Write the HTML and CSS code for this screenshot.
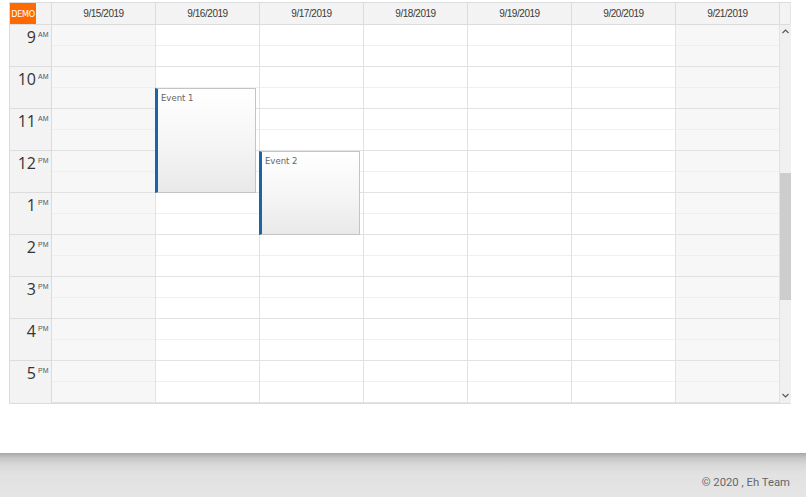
FILE: index.html
```html
<!DOCTYPE html>
<html>
<head>
<meta charset="utf-8">
<link rel="stylesheet" href="styles.css">
</head>
<body>
<div class="page">
  <div class="cal">
    <div class="head">
      <div class="corner"><span class="demo">DEMO</span></div>
      <div class="hcell">9/15/2019</div>
      <div class="hcell">9/16/2019</div>
      <div class="hcell">9/17/2019</div>
      <div class="hcell">9/18/2019</div>
      <div class="hcell">9/19/2019</div>
      <div class="hcell">9/20/2019</div>
      <div class="hcell">9/21/2019</div>
      <div class="hcell hscroll"></div>
    </div>
    <div class="body">
      <div class="times">
        <div class="hour"><span class="num">9</span><span class="ap">AM</span></div>
        <div class="hour"><span class="num">10</span><span class="ap">AM</span></div>
        <div class="hour"><span class="num">11</span><span class="ap">AM</span></div>
        <div class="hour"><span class="num">12</span><span class="ap">PM</span></div>
        <div class="hour"><span class="num">1</span><span class="ap">PM</span></div>
        <div class="hour"><span class="num">2</span><span class="ap">PM</span></div>
        <div class="hour"><span class="num">3</span><span class="ap">PM</span></div>
        <div class="hour"><span class="num">4</span><span class="ap">PM</span></div>
        <div class="hour"><span class="num">5</span><span class="ap">PM</span></div>
      </div>
      <div class="day weekend"></div>
      <div class="day">
        <div class="event" style="top:63px;height:105px;"><span>Event 1</span></div>
      </div>
      <div class="day">
        <div class="event" style="top:126px;height:84px;"><span>Event 2</span></div>
      </div>
      <div class="day"></div>
      <div class="day"></div>
      <div class="day"></div>
      <div class="day weekend"></div>
      <div class="scroll">
        <svg class="arrow up" width="7" height="5" viewBox="0 0 7 5"><path d="M0.5 4 L3.5 1 L6.5 4" fill="none" stroke="#555" stroke-width="1.1"/></svg>
        <div class="track"><div class="thumb"></div></div>
        <svg class="arrow down" width="7" height="5" viewBox="0 0 7 5"><path d="M0.5 1 L3.5 4 L6.5 1" fill="none" stroke="#555" stroke-width="1.1"/></svg>
      </div>
    </div>
  </div>
</div>
<footer class="footer">
  <span class="copy">© 2020 , Eh Team</span>
</footer>
</body>
</html>
```
FILE: styles.css
```css
* { box-sizing: border-box; }
html, body { margin: 0; padding: 0; }
body {
  width: 806px;
  height: 497px;
  overflow: hidden;
  background: #fff;
  font-family: "Liberation Sans", Arial, sans-serif;
  display: flex;
  flex-direction: column;
}
.page {
  flex: 1;
  padding: 2px 0 0 9px;
}
.cal {
  width: 782px;
  border: 1px solid #dcdcdc;
  border-right-color: #e4e4e4;
}
.head {
  display: grid;
  grid-template-columns: 42px repeat(7, 104px) 11px;
  height: 22px;
  background: #f3f3f3;
  border-bottom: 1px solid #dcdcdc;
}
.corner {
  border-right: 1px solid #dcdcdc;
  padding: 0;
}
.demo {
  display: flex;
  align-items: center;
  justify-content: center;
  width: 26px;
  height: 21px;
  background: #ff6a00;
  color: #fff;
  font-size: 9px;
  letter-spacing: -0.3px;
  font-family: "DejaVu Sans Condensed", "DejaVu Sans", sans-serif;
}
.hcell {
  border-right: 1px solid #dcdcdc;
  font-size: 10px;
  letter-spacing: -0.45px;
  color: #3a3a3a;
  display: flex;
  align-items: center;
  justify-content: center;
  padding-bottom: 1px;
}
.hscroll { border-right: none; }
.body {
  display: grid;
  grid-template-columns: 42px repeat(7, 104px) 11px;
  height: 378px;
}
.times {
  background: #f3f3f3;
  border-right: 1px solid #dcdcdc;
}
.hour {
  height: 42px;
  border-bottom: 1px solid #dcdcdc;
  display: flex;
  justify-content: flex-end;
  align-items: flex-start;
  padding: 2px 2px 0 0;
  color: #333;
}
.hour:last-child { border-bottom: none; }
.num {
  font-family: "Open Sans", sans-serif;
  font-size: 16px;
  line-height: 20px;
}
.ap {
  font-family: "Liberation Sans", sans-serif;
  font-size: 7px;
  line-height: 9px;
  margin-left: 2px;
  margin-top: 3px;
  color: #555;
  width: 11px;
}
.day {
  position: relative;
  border-right: 1px solid #e2e2e2;
  background-color: #fff;
  background-image: repeating-linear-gradient(to bottom,
    transparent 0, transparent 20px, #efefef 20px, #efefef 21px,
    transparent 21px, transparent 41px, #e2e2e2 41px, #e2e2e2 42px);
}
.day.weekend { background-color: #f7f7f7; }
.event {
  position: absolute;
  left: -1px;
  width: 101px;
  border: 1px solid #c4c4c4;
  border-left: 3px solid #1c64a6;
  background: linear-gradient(to bottom, #ffffff 0%, #f6f6f6 50%, #e9e9e9 100%);
  padding: 4px 3px;
  font-family: "DejaVu Sans", sans-serif;
  font-size: 8.5px;
  color: #666;
  line-height: 10px;
  z-index: 2;
}
.scroll {
  background: #f0f0f0;
  display: flex;
  flex-direction: column;
  align-items: center;
}
.arrow { flex: none; }
.arrow.up { margin-top: 4px; }
.arrow.down { margin-bottom: 5px; }
.track {
  flex: 1;
  width: 100%;
  position: relative;
}
.thumb {
  position: absolute;
  left: 0;
  right: 0;
  top: 139px;
  height: 127px;
  background: #cdcdcd;
}
.footer {
  height: 44px;
  flex: none;
  background: linear-gradient(to bottom, #a6a6a6 0px, #c6c6c6 5px, #d9d9d9 12px, #e2e2e2 22px, #e5e5e5 100%);
  display: flex;
  justify-content: flex-end;
  align-items: center;
  padding: 14px 16px 0 0;
}
.copy {
  font-family: Roboto, sans-serif;
  font-size: 11.3px;
  color: #666;
}
```
